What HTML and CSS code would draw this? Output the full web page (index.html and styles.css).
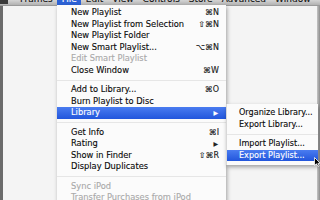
FILE: index.html
```html
<!DOCTYPE html>
<html>
<head>
<meta charset="utf-8">
<link rel="stylesheet" href="styles.css">
</head>
<body>
<div class="screen">
  <div class="menubar">
    <span class="mb-apple"></span>
    <span class="mb-item">Frames</span>
    <span class="mb-item active">File</span>
    <span class="mb-item">Edit</span>
    <span class="mb-item">View</span>
    <span class="mb-item">Controls</span>
    <span class="mb-item">Store</span>
    <span class="mb-item">Advanced</span>
    <span class="mb-item">Window</span>
  </div>
  <div class="desk">
    <div class="edge-l"></div>
    <div class="win"></div>
    <div class="edge-r"></div>
  </div>

  <div class="menu file-menu">
    <div class="row"><span>New Playlist</span><span class="key">⌘N</span></div>
    <div class="row"><span>New Playlist from Selection</span><span class="key">⇧⌘N</span></div>
    <div class="row"><span>New Playlist Folder</span><span class="key"></span></div>
    <div class="row"><span>New Smart Playlist...</span><span class="key">⌥⌘N</span></div>
    <div class="row disabled"><span>Edit Smart Playlist</span><span class="key"></span></div>
    <div class="row"><span>Close Window</span><span class="key">⌘W</span></div>
    <div class="sep"></div>
    <div class="row"><span>Add to Library...</span><span class="key">⌘O</span></div>
    <div class="row"><span>Burn Playlist to Disc</span><span class="key"></span></div>
    <div class="row hl"><span>Library</span><span class="arrow">▶</span></div>
    <div class="sep"></div>
    <div class="row"><span>Get Info</span><span class="key">⌘I</span></div>
    <div class="row"><span>Rating</span><span class="arrow">▶</span></div>
    <div class="row"><span>Show in Finder</span><span class="key">⇧⌘R</span></div>
    <div class="row"><span>Display Duplicates</span><span class="key"></span></div>
    <div class="sep"></div>
    <div class="row disabled"><span>Sync iPod</span><span class="key"></span></div>
    <div class="row disabled"><span>Transfer Purchases from iPod</span><span class="key"></span></div>
  </div>

  <div class="menu sub-menu">
    <div class="row"><span>Organize Library...</span></div>
    <div class="row"><span>Export Library...</span></div>
    <div class="sep"></div>
    <div class="row"><span>Import Playlist...</span></div>
    <div class="row hl"><span>Export Playlist...</span></div>
  </div>

  <svg class="cursor" width="7" height="10" viewBox="0 0 7 10"><path d="M0.5 0.5 L0.5 8.5 L2.5 6.8 L4 9.5 L5.2 9 L3.9 6.3 L6.3 6.3 Z" fill="#000" stroke="#fff" stroke-width="0.8"/></svg>
</div>
</body>
</html>
```

FILE: styles.css
```css
* { box-sizing: border-box; }
html, body { margin: 0; padding: 0; }
body { width: 320px; height: 200px; overflow: hidden; background: #f2f2f2; }
.screen {
  position: relative;
  width: 320px;
  height: 200px;
  overflow: hidden;
  font-family: "DejaVu Sans", "Liberation Sans", sans-serif;
  font-size: 8.3px;
  color: #0a0a0a;
  -webkit-text-stroke: 0.12px #0a0a0a;
  display: flex;
  flex-direction: column;
}
.menubar {
  height: 6px;
  flex: none;
  display: flex;
  overflow: hidden;
  background: linear-gradient(#d4d4d4, #b2b2b2);
  border-bottom: 1px solid #9a9a9a;
}
.mb-apple { width: 8px; height: 4px; background: #3a3a3a; margin-right: 7.5px; }
.mb-item {
  font-size: 9px;
  line-height: 11px;
  margin-top: -6px;
  height: 12px;
  padding: 0 4.5px;
  color: #111;
}
.mb-item.active { background: #2d62d6; color: #fff; -webkit-text-stroke: 0.12px #fff; }
.desk { flex: 1; display: flex; }
.edge-l { width: 3px; background: #6b6b6b; }
.win { flex: 1; background: #f4f4f4; }
.edge-r { width: 3px; background: linear-gradient(90deg, #c4c4c4, #8c8c8c); }

.menu {
  position: absolute;
  background: #fbfbfb;
  box-shadow: 1px 2px 4px rgba(0,0,0,0.35);
}
.file-menu { left: 57px; top: 5px; width: 169px; padding-top: 2.25px; }
.sub-menu { left: 226px; top: 104px; width: 92px; padding: 3.25px 0 4px; border-left: 1px solid #d8d8d8; font-size: 8.1px; }
.row {
  height: 11.5px;
  line-height: 11.5px;
  display: flex;
  justify-content: space-between;
  padding: 0 7px 0 14px;
  white-space: nowrap;
}
.sub-menu .row { padding-left: 12px; }
.key { color: #222; font-size: 8px; }
.arrow { font-size: 6px; color: #222; padding-right: 1px; }
.row.disabled { color: #a9a9a9; -webkit-text-stroke: 0.12px #a9a9a9; }
.row.hl { background: linear-gradient(#4a7cf0, #2256dc); color: #fff; -webkit-text-stroke: 0.12px #fff; }
.row.hl .arrow { color: #fff; }
.sep { height: 8px; display: flex; align-items: center; }
.sep::after { content: ""; flex: 1; height: 1px; background: #e6e6e6; }
.cursor { position: absolute; left: 314px; top: 157px; }
```
